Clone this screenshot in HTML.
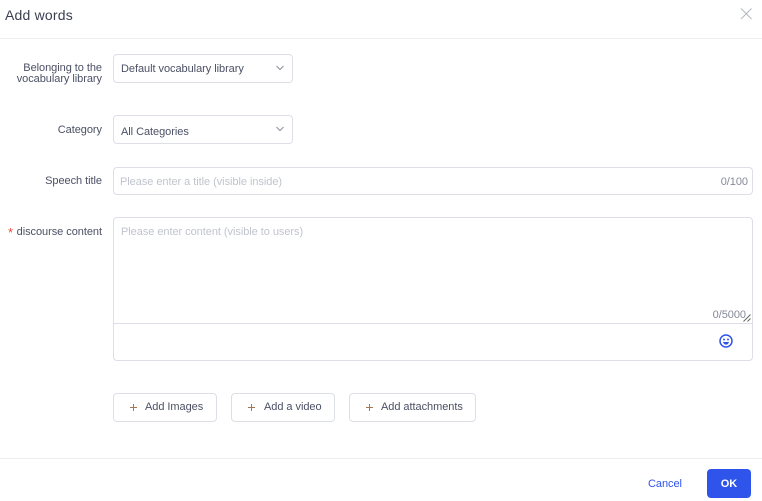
<!DOCTYPE html>
<html>
<head>
<meta charset="utf-8">
<style>
html,body{margin:0;padding:0;background:#fff;}
body{width:762px;height:501px;position:relative;overflow:hidden;font-family:"Liberation Sans",Arial,sans-serif;font-size:11px;letter-spacing:-.05px;color:#4b5064;}
.a{position:absolute;white-space:nowrap;}
.box{position:absolute;box-sizing:border-box;border:1px solid #dcdfe6;border-radius:4px;background:#fff;}
.lbl{position:absolute;right:660px;text-align:right;line-height:11px;color:#4b5064;white-space:nowrap;}
.ph{color:#c0c4cc;}
.btn{position:absolute;box-sizing:border-box;top:393px;height:29px;border:1px solid #dcdfe6;border-radius:4px;background:#fff;}
.btn span{position:absolute;top:6px;line-height:14px;color:#4b5064;white-space:nowrap;}
.btn svg{position:absolute;top:9px;}
</style>
</head>
<body>
<div class="a" style="left:5px;top:7px;font-size:14px;letter-spacing:.2px;line-height:17px;color:#3a3f50;">Add words</div>
<svg class="a" style="left:740px;top:8px" width="12" height="12" viewBox="0 0 12 12"><path d="M1 .5l10.500 10.500M11.500 .5L1 11" stroke="#b4b7bd" stroke-width="1" fill="none"/></svg>
<div class="a" style="left:0;top:38px;width:762px;height:1px;background:#ebedf0;"></div>

<div class="lbl" style="top:63px;">Belonging to the<br>vocabulary library</div>
<div class="box" style="left:113px;top:54px;width:180px;height:29px;"></div>
<div class="a" style="left:121px;top:62px;line-height:14px;">Default vocabulary library</div>
<svg class="a" style="left:276px;top:65px" width="8" height="6" viewBox="0 0 8 6"><path d="M.5 1l3.500 3.500L7.500 1" stroke="#8a8f99" fill="none"/></svg>

<div class="lbl" style="top:125px;">Category</div>
<div class="box" style="left:113px;top:115px;width:180px;height:29px;"></div>
<div class="a" style="left:121px;top:125px;line-height:14px;">All Categories</div>
<svg class="a" style="left:276px;top:126px" width="8" height="6" viewBox="0 0 8 6"><path d="M.5 1l3.500 3.500L7.500 1" stroke="#8a8f99" fill="none"/></svg>

<div class="lbl" style="top:176px;">Speech title</div>
<div class="box" style="left:113px;top:167px;width:640px;height:28px;"></div>
<div class="a ph" style="left:120px;top:175px;line-height:14px;">Please enter a title (visible inside)</div>
<div class="a" style="right:14px;top:175px;line-height:14px;color:#858a99;">0/100</div>

<div class="a" style="left:8px;top:226px;line-height:14px;color:#f04a3a;font-size:13px;">*</div>
<div class="lbl" style="top:227px;">discourse content</div>
<div class="box" style="left:113px;top:217px;width:640px;height:144px;"></div>
<div class="a ph" style="left:121px;top:225px;line-height:14px;">Please enter content (visible to users)</div>
<div class="a" style="left:114px;top:323px;width:638px;height:1px;background:#dcdfe6;"></div>
<div class="a" style="right:16px;top:308px;line-height:14px;color:#858a99;">0/5000</div>
<svg class="a" style="left:743px;top:314px" width="8" height="8" viewBox="0 0 8 8"><path d="M.5 7.500l7-7M4.500 7.500l3-3" stroke="#666" stroke-width="1" fill="none"/></svg>
<svg class="a" style="left:719px;top:334px" width="14" height="14" viewBox="0 0 14 14"><circle cx="7" cy="7" r="6" stroke="#2f54eb" stroke-width="1.500" fill="none"/><circle cx="5" cy="5.500" r="1" fill="#2f54eb"/><circle cx="9" cy="5.500" r="1" fill="#2f54eb"/><path d="M4 8h6c-.5 1.800-1.600 2.600-3 2.600S4.500 9.800 4 8z" fill="#2f54eb"/></svg>

<div class="btn" style="left:113px;width:104px;"><svg style="left:15px" width="9" height="9" viewBox="0 0 9 9"><path d="M4.500 1v7M1 4.500h7" stroke="#a5764f" fill="none"/></svg><span style="left:31px;">Add Images</span></div>
<div class="btn" style="left:231px;width:104px;"><svg style="left:15px" width="9" height="9" viewBox="0 0 9 9"><path d="M4.500 1v7M1 4.500h7" stroke="#a5764f" fill="none"/></svg><span style="left:32px;">Add a video</span></div>
<div class="btn" style="left:349px;width:127px;"><svg style="left:15px" width="9" height="9" viewBox="0 0 9 9"><path d="M4.500 1v7M1 4.500h7" stroke="#a5764f" fill="none"/></svg><span style="left:31px;">Add attachments</span></div>

<div class="a" style="left:0;top:458px;width:762px;height:1px;background:#ebedf0;"></div>
<div class="a" style="left:648px;top:477px;line-height:14px;color:#2f54eb;">Cancel</div>
<div class="a" style="left:707px;top:469px;width:44px;height:29px;background:#2f54eb;border-radius:4px;color:#fff;font-weight:bold;text-align:center;line-height:30px;">OK</div>
</body>
</html>
